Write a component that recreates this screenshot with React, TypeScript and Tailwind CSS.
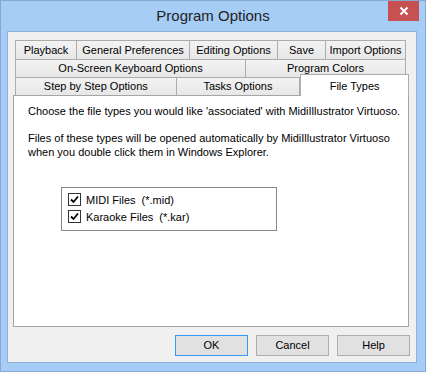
import { type ReactNode } from 'react';

const font = { fontFamily: '"Liberation Sans", Arial, sans-serif' };

function Tab({ w, children, first }: { w: string; children: ReactNode; first?: boolean }) {
  return (
    <div
      className={`${w} ${first ? '' : '-ml-px'} h-full flex items-center justify-center border border-b-0 border-[#acacac] bg-gradient-to-b from-[#f3f3f3] to-[#e7e7e7] text-[11px] text-black whitespace-nowrap`}
    >
      {children}
    </div>
  );
}

function Check({ label }: { label: string }) {
  return (
    <div className="flex items-center h-[17px] text-[11px] text-black">
      <div className="w-[13px] h-[13px] border border-[#333] bg-white flex items-center justify-center">
        <svg width="9" height="9" viewBox="0 0 9 9">
          <path d="M1 4.5 L3.5 7 L8 1.5" fill="none" stroke="#000" strokeWidth="1.8" />
        </svg>
      </div>
      <span className="ml-[5px] whitespace-pre">{label}</span>
    </div>
  );
}

function Btn({ children, def }: { children: ReactNode; def?: boolean }) {
  return (
    <div
      className={`w-[73px] h-[21px] flex items-center justify-center border ${def ? 'border-[#3399ff]' : 'border-[#adadad]'} bg-[#e1e1e1] text-[11px] text-black`}
    >
      {children}
    </div>
  );
}

export default function App() {
  return (
    <div style={font} className="w-[426px] h-[372px] bg-[#a6cdf5] border border-[#86a8d3] flex flex-col overflow-hidden">
      <div className="relative h-[30px] flex items-center justify-center">
        <span className="text-[15px] text-[#222] pt-[1px]">Program Options</span>
        <div className="absolute right-[6px] top-[-1px] w-[31px] h-[21px] bg-[#c75050] flex items-center justify-center">
          <svg width="10" height="10" viewBox="0 0 10 10">
            <path d="M1.5 1.5 L8.5 8.5 M8.5 1.5 L1.5 8.5" stroke="#fff" strokeWidth="2" />
          </svg>
        </div>
      </div>
      <div className="ml-[6px] w-[410px] h-[332px] bg-[#f0f0f0] border border-[#8fb0d9] flex flex-col pt-[8px] pl-[5px]">
        <div className="flex flex-col pl-[2px] w-[396px]">
          <div className="flex h-[19px]">
            <Tab w="w-[62px]" first>Playback</Tab>
            <Tab w="w-[114px]">General Preferences</Tab>
            <Tab w="w-[89px]">Editing Options</Tab>
            <Tab w="w-[49px]">Save</Tab>
            <Tab w="w-[81px]">Import Options</Tab>
          </div>
          <div className="flex h-[18px]">
            <Tab w="w-[231px]" first>On-Screen Keyboard Options</Tab>
            <Tab w="w-[161px]">Program Colors</Tab>
          </div>
          <div className="flex h-[18px] items-end">
            <Tab w="w-[162px]" first>Step by Step Options</Tab>
            <Tab w="w-[125px]">Tasks Options</Tab>
            <div className="relative z-10 w-[109px] h-[22px] -mb-px self-end border border-b-0 border-[#acacac] bg-white flex justify-center pt-[3px] text-[11px] text-black">
              File Types
            </div>
          </div>
        </div>
        <div className="w-[396px] h-[232px] bg-white border border-[#a5a5a5] pl-[14px] pt-[8px] text-[11px] leading-[14px] text-black">
          <p>Choose the file types you would like 'associated' with MidiIllustrator Virtuoso.</p>
          <p className="mt-[13px]">Files of these types will be opened automatically by MidiIllustrator Virtuoso</p>
          <p>when you double click them in Windows Explorer.</p>
          <div className="mt-[28px] ml-[33px] w-[216px] h-[44px] border border-[#828790] pl-[6px] pt-[3px]">
            <Check label="MIDI Files  (*.mid)" />
            <Check label="Karaoke Files  (*.kar)" />
          </div>
        </div>
        <div className="flex gap-[8px] mt-[8px] ml-[162px]">
          <Btn def>OK</Btn>
          <Btn>Cancel</Btn>
          <Btn>Help</Btn>
        </div>
      </div>
    </div>
  );
}
